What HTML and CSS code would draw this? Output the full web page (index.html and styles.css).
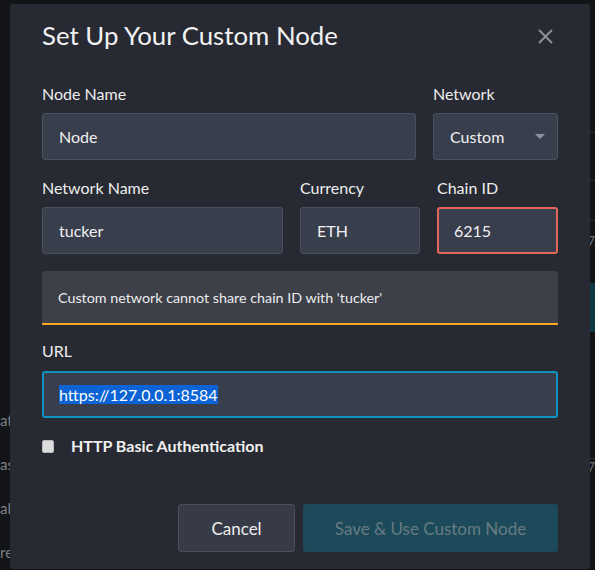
FILE: index.html
```html
<!DOCTYPE html>
<html lang="en">
<head>
<meta charset="utf-8">
<title>Set Up Your Custom Node</title>
<link rel="stylesheet" href="styles.css">
</head>
<body>
<div class="backdrop">
  <div class="side">
    <div class="side-item">ate</div>
    <div class="side-item">as</div>
    <div class="side-item">ab</div>
    <div class="side-item">re</div>
  </div>
  <div class="main">
    <div class="row r1"></div>
    <div class="row r2"></div>
    <div class="row r3"><span class="digit">7</span></div>
    <div class="teal"></div>
    <div class="row r4"><span class="digit">7</span></div>
  </div>
</div>

<div class="modal">
  <div class="modal-head">
    <h1 class="title">Set Up Your Custom Node</h1>
    <svg class="close" width="15" height="15" viewBox="0 0 15 15" aria-hidden="true">
      <path d="M1 1 L14 14 M14 1 L1 14" stroke="#8c9099" stroke-width="2" fill="none"/>
    </svg>
  </div>

  <div class="grid g1">
    <label class="field">
      <span class="label">Node Name</span>
      <input class="input" value="Node">
    </label>
    <label class="field">
      <span class="label">Network</span>
      <span class="input select">Custom<span class="caret"></span></span>
    </label>
  </div>

  <div class="grid g2">
    <label class="field">
      <span class="label">Network Name</span>
      <input class="input" value="tucker">
    </label>
    <label class="field">
      <span class="label">Currency</span>
      <input class="input" value="ETH">
    </label>
    <label class="field">
      <span class="label">Chain ID</span>
      <input class="input invalid" value="6215">
    </label>
  </div>

  <div class="warning">Custom network cannot share chain ID with 'tucker'</div>

  <label class="field url-field">
    <span class="label">URL</span>
    <span class="input focused"><span class="sel">https://127.0.0.1:8584</span></span>
  </label>

  <label class="check">
    <span class="box"></span>
    <span class="check-label">HTTP Basic Authentication</span>
  </label>

  <div class="actions">
    <button class="btn cancel">Cancel</button>
    <button class="btn save">Save &amp; Use Custom Node</button>
  </div>
</div>
</body>
</html>
```

FILE: styles.css
```css
* { box-sizing: border-box; }

html, body {
  margin: 0;
  height: 100%;
}

body {
  background: #131418;
  font-family: Lato, "Open Sans", "Liberation Sans", sans-serif;
  color: #ececec;
  overflow: hidden;
}

/* ---------- dimmed page behind the modal ---------- */
.backdrop {
  display: flex;
  height: 100%;
}
.side {
  width: 40px;
  padding-top: 410px;
  display: flex;
  flex-direction: column;
  gap: 24px;
}
.side-item {
  font-size: 15px;
  line-height: 20px;
  color: #7d7f84;
}
.main {
  flex: 1;
  display: flex;
  flex-direction: column;
  padding-top: 132px;
}
.row {
  border-top: 1px solid #2a2c31;
  height: 46px;
  display: flex;
  justify-content: flex-end;
  align-items: flex-start;
}
.r1 { height: 48px; }
.r2 { height: 40px; }
.r3 { height: 63px; padding-top: 12px; }
.teal {
  height: 49px;
  background: #0f3a44;
}
.r4 { margin-top: 126px; padding-top: 0; }
.digit {
  color: #6f747c;
  font-size: 13px;
  line-height: 16px;
}

/* ---------- modal ---------- */
.modal {
  position: fixed;
  left: 10px;
  top: 4px;
  width: 580px;
  height: 565px;
  background: #272a32;
  border-radius: 3px;
  padding: 16px 32px 0 32px;
  display: flex;
  flex-direction: column;
}

.modal-head {
  display: flex;
  justify-content: space-between;
  align-items: flex-start;
}
.title {
  margin: 0;
  font-size: 25.8px;
  font-weight: 400;
  line-height: 30px;
  color: #f2f2f2;
}
.close {
  margin-top: 9px;
  margin-right: 5px;
}

.grid {
  display: grid;
  column-gap: 17px;
}
.g1 {
  grid-template-columns: 1fr 125px;
  margin-top: 35px;
}
.g2 {
  grid-template-columns: 1fr 120px 121px;
  margin-top: 19px;
}

.field {
  display: flex;
  flex-direction: column;
  gap: 10px;
}
.label {
  font-size: 16px;
  line-height: 18px;
  color: #ededed;
}

.input {
  display: flex;
  align-items: center;
  height: 47px;
  width: 100%;
  padding: 0 16px;
  background: #393e4d;
  border: 1px solid #4b505f;
  border-radius: 3px;
  font-family: inherit;
  font-size: 16px;
  color: #f0f0f0;
  outline: none;
}
.select {
  justify-content: space-between;
  padding-right: 12px;
}
.caret {
  width: 0;
  height: 0;
  border-left: 5px solid transparent;
  border-right: 5px solid transparent;
  border-top: 5px solid #8d919b;
}
.invalid {
  border: 2px solid #e2675a;
  padding-left: 15px;
}
.focused {
  border: 2px solid #0e93bf;
  padding-left: 15px;
}
.sel {
  background: #0b63d6;
  color: #ffffff;
  line-height: 19px;
}

.warning {
  margin-top: 17px;
  height: 54px;
  background: #3d4049;
  border-bottom: 2px solid #f5a623;
  border-radius: 3px 3px 0 0;
  padding: 0 16px;
  display: flex;
  align-items: center;
  font-size: 14.3px;
  color: #ececec;
}

.url-field {
  margin-top: 17px;
  gap: 11px;
}

.check {
  margin-top: 18px;
  display: flex;
  align-items: center;
  gap: 17px;
}
.box {
  width: 12px;
  height: 13px;
  background: #dcdcdc;
  border: 1px solid #b9b9b9;
  border-radius: 2px;
}
.check-label {
  font-size: 16px;
  font-weight: 700;
  line-height: 20px;
  color: #f0f0f0;
}

.actions {
  margin-top: 48px;
  display: flex;
  justify-content: flex-end;
  gap: 8px;
}
.btn {
  height: 48px;
  border-radius: 3px;
  font-family: inherit;
  font-size: 17px;
  padding: 0;
}
.cancel {
  width: 117px;
  background: #373b47;
  border: 1px solid #4a4e5a;
  color: #ececec;
}
.save {
  width: 255px;
  background: #1c4a5a;
  border: none;
  color: #677a81;
}
```
